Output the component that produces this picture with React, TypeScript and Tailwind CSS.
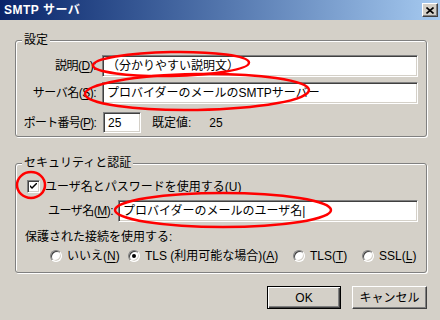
import React from 'react';

const font = { fontFamily: '"Liberation Sans", "Noto Sans CJK JP", sans-serif' };

const U = ({ children }: { children: React.ReactNode }) => <span className="underline underline-offset-2">{children}</span>;

const Field = ({ value, className = '' }: { value: string; className?: string }) => (
    <div className={`h-[22px] bg-white border border-t-[#808080] border-l-[#808080] border-r-white border-b-white shadow-[inset_1px_1px_0_#404040,inset_-1px_-1px_0_#d4d0c8] flex items-center pl-[4px] text-black whitespace-nowrap overflow-hidden ${className}`}>
        {value}
    </div>
);

const Radio = ({ checked = false }: { checked?: boolean }) => (
    <span className="w-[12px] h-[12px] rounded-full bg-white border border-t-[#808080] border-l-[#808080] border-r-white border-b-white shadow-[inset_1px_1px_0_#404040,inset_-1px_-1px_0_#d4d0c8] flex items-center justify-center shrink-0">
        {checked && <span className="w-[4px] h-[4px] rounded-full bg-black" />}
    </span>
);

const Option = ({ checked = false, className = '', children }: { checked?: boolean; className?: string; children: React.ReactNode }) => (
    <div className={`flex items-center gap-[5px] shrink-0 ${className}`}>
        <Radio checked={checked} />
        <span className="whitespace-nowrap">{children}</span>
    </div>
);

const Group = ({ title, className = '', children }: { title: string; className?: string; children: React.ReactNode }) => (
    <div className={`relative border border-[#808080] rounded-[3px] shadow-[inset_1px_1px_0_#fff,1px_1px_0_#fff] ${className}`}>
        <span className="absolute left-[6px] top-[-9px] px-[2px] bg-[#d4d0c8] leading-[16px]">{title}</span>
        {children}
    </div>
);

export default function App() {
    return (
        <div className="relative w-[440px] h-[320px] bg-[#d4d0c8] text-[12px] text-black overflow-hidden" style={font}>
            {/* title bar */}
            <div className="h-[20px] bg-gradient-to-r from-[#0a246a] to-[#a6caf0] flex items-center justify-between pl-[4px] pr-[2px]">
                <span className="text-white font-bold text-[12px] tracking-[0.5px]">SMTP サーバ</span>
                <div className="w-[16px] h-[14px] bg-[#d4d0c8] border border-t-white border-l-white border-r-[#404040] border-b-[#404040] shadow-[inset_-1px_-1px_0_#808080] flex items-center justify-center">
                    <svg width="8" height="7" viewBox="0 0 8 7">
                        <path d="M0.5 0.5 L7.5 6.5 M7.5 0.5 L0.5 6.5" stroke="#000" strokeWidth="1.6" />
                    </svg>
                </div>
            </div>

            <div className="pl-[15px] pr-[13px]">
                <Group title="設定" className="mt-[20px] h-[97px] pt-[14px] pr-[8px]">
                    <div className="flex items-center">
                        <span className="w-[80px] text-right shrink-0 tracking-[-0.5px]">説明(<U>D</U>):</span>
                        <Field value="（分かりやすい説明文）" className="ml-[6px] flex-1" />
                    </div>
                    <div className="flex items-center mt-[5px]">
                        <span className="w-[80px] text-right shrink-0 tracking-[-0.5px]">サーバ名(<U>S</U>):</span>
                        <Field value="プロバイダーのメールのSMTPサーバー" className="ml-[6px] flex-1" />
                    </div>
                    <div className="flex items-center mt-[8px]">
                        <span className="w-[80px] text-right shrink-0 tracking-[-0.8px] whitespace-nowrap">ポート番号(<U>P</U>):</span>
                        <Field value="25" className="ml-[7px] w-[38px] !h-[21px]" />
                        <span className="ml-[11px]">既定値:</span>
                        <span className="ml-[18px]">25</span>
                    </div>
                </Group>

                <Group title="セキュリティと認証" className="mt-[26px] h-[110px] pt-[16px] pl-[11px] pr-[8px]">
                    <div className="flex items-center h-[13px]">
                        <span className="w-[13px] h-[13px] bg-white border border-t-[#808080] border-l-[#808080] border-r-white border-b-white shadow-[inset_1px_1px_0_#404040,inset_-1px_-1px_0_#d4d0c8] flex items-center justify-center">
                            <svg width="7" height="7" viewBox="0 0 7 7">
                                <path d="M0 2 L0 4 L2 6 L7 1 L7 -1 L2 4 Z" fill="#000" />
                            </svg>
                        </span>
                        <span className="ml-[5px]">ユーザ名とパスワードを使用する(<U>U</U>)</span>
                    </div>
                    <div className="flex items-center mt-[7px]">
                        <span className="w-[86px] text-right shrink-0 tracking-[-0.5px]">ユーザ名(<U>M</U>):</span>
                        <Field value="プロバイダーのメールのユーザ名|" className="ml-[5px] flex-1" />
                    </div>
                    <div className="mt-[7px] -ml-[2px] leading-[16px]">保護された接続を使用する:</div>
                    <div className="flex items-center mt-[3px] h-[16px]">
                        <Option className="ml-[23px] w-[78px]">いいえ(<U>N</U>)</Option>
                        <Option checked className="w-[165px]">TLS (利用可能な場合)(<U>A</U>)</Option>
                        <Option className="w-[69px]">TLS(<U>T</U>)</Option>
                        <Option>SSL(<U>L</U>)</Option>
                    </div>
                </Group>

                <div className="flex justify-end gap-[11px] mt-[13px]">
                    <button className="w-[74px] h-[23px] bg-[#d4d0c8] border border-black shadow-[inset_1px_1px_0_#fff,inset_-1px_-1px_0_#404040,inset_-2px_-2px_0_#808080]">OK</button>
                    <button className="w-[75px] h-[23px] bg-[#d4d0c8] border border-t-white border-l-white border-r-[#404040] border-b-[#404040] shadow-[inset_-1px_-1px_0_#808080]">キャンセル</button>
                </div>
            </div>

            {/* red annotation marks */}
            <svg className="absolute inset-0 pointer-events-none" width="440" height="320" viewBox="0 0 440 320">
                <g fill="none" stroke="#ff0000" strokeWidth="2.5">
                    <ellipse cx="171" cy="64" rx="78" ry="12" transform="rotate(-1 171 64)" />
                    <ellipse cx="197" cy="92" rx="112" ry="18" transform="rotate(-1 197 92)" />
                    <ellipse cx="31" cy="185" rx="14" ry="13" />
                    <ellipse cx="223" cy="210" rx="108" ry="17" />
                </g>
            </svg>
        </div>
    );
}
